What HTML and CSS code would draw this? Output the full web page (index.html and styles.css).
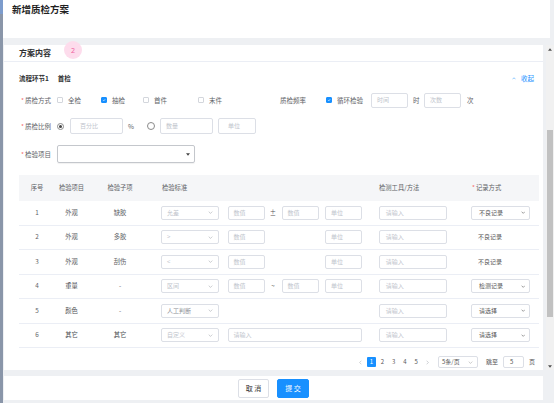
FILE: index.html
```html
<!DOCTYPE html>
<html lang="zh">
<head>
<meta charset="utf-8">
<title>新增质检方案</title>
<link rel="stylesheet" href="styles.css">
</head>
<body>
<div class="app">
  <div class="edge"></div>
  <div class="modal">
    <header class="modal-head"><h1>新增质检方案</h1></header>
    <div class="scroll">
      <section class="card">
        <div class="card-title">方案内容</div>
        <span class="step">2</span>
        <div class="card-body">
          <div class="flow-row">
            <span class="flow-name">流程环节1</span>
            <span class="flow-val">首检</span>
            <a class="collapse"><svg class="chev-up" viewBox="0 0 8 5"><path d="M1 4l3-3 3 3" fill="none" stroke="currentColor" stroke-width="1"/></svg>收起</a>
          </div>

          <div class="form-row r1">
            <div class="lbl"><i>*</i>质检方式</div>
            <div class="checks">
              <span class="chk-item"><span class="cb"></span>全检</span>
              <span class="chk-item"><span class="cb on"><svg viewBox="0 0 8 8"><path d="M2 4.2l1.6 1.6L6.2 2.6" fill="none" stroke="#fff" stroke-width="1.2"/></svg></span>抽检</span>
              <span class="chk-item"><span class="cb"></span>首件</span>
              <span class="chk-item"><span class="cb"></span>末件</span>
            </div>
            <div class="lbl-plain">质检频率</div>
            <span class="chk-item"><span class="cb on"><svg viewBox="0 0 8 8"><path d="M2 4.2l1.6 1.6L6.2 2.6" fill="none" stroke="#fff" stroke-width="1.2"/></svg></span>循环检验</span>
            <div class="inp w37 ml8"><span class="ph">时间</span></div>
            <span class="unit-txt ml5">时</span>
            <div class="inp w37 ml4"><span class="ph">次数</span></div>
            <span class="unit-txt ml6">次</span>
          </div>

          <div class="form-row r2">
            <div class="lbl"><i>*</i>质检比例</div>
            <span class="radio on"></span>
            <div class="inp w53 ml6 pl9"><span class="ph">百分比</span></div>
            <span class="unit-txt ml5">%</span>
            <span class="radio ml13"></span>
            <div class="inp w53 ml5"><span class="ph">数量</span></div>
            <div class="inp w38 ml5 pl9"><span class="ph">单位</span></div>
          </div>

          <div class="form-row r3">
            <div class="lbl"><i>*</i>检验项目</div>
            <div class="big-select"><svg viewBox="0 0 6 4"><path d="M0 0h6L3 4z" fill="#444"/></svg></div>
          </div>

          <div class="tbl">
            <div class="tr th">
              <div class="c">序号</div>
              <div class="c">检验项目</div>
              <div class="c">检验子项</div>
              <div class="l std-h">检验标准</div>
              <div class="l tool-h">检测工具/方法</div>
              <div class="l rec-h"><i>*</i>记录方式</div>
            </div>

            <div class="tr">
              <div class="c">1</div>
              <div class="c">外观</div>
              <div class="c">缺胶</div>
              <div class="std">
                <div class="sel s1"><span class="ph">允差</span><svg class="chev" viewBox="0 0 8 5"><path d="M1 1l3 3 3-3" fill="none" stroke="currentColor"/></svg></div>
                <div class="inp s3"><span class="ph">数值</span></div>
                <span class="sym">±</span>
                <div class="inp s5"><span class="ph">数值</span></div>
                <div class="inp s7"><span class="ph">单位</span></div>
              </div>
              <div class="tool"><div class="inp tool-inp"><span class="ph">请输入</span></div></div>
              <div class="rec"><div class="rsel">不良记录<svg class="chev" viewBox="0 0 8 5"><path d="M1 1l3 3 3-3" fill="none" stroke="currentColor"/></svg></div></div>
            </div>

            <div class="tr">
              <div class="c">2</div>
              <div class="c">外观</div>
              <div class="c">多胶</div>
              <div class="std">
                <div class="sel s1"><span class="ph">&gt;</span><svg class="chev" viewBox="0 0 8 5"><path d="M1 1l3 3 3-3" fill="none" stroke="currentColor"/></svg></div>
                <div class="inp s3"><span class="ph">数值</span></div>
                <div class="inp s7"><span class="ph">单位</span></div>
              </div>
              <div class="tool"><div class="inp tool-inp"><span class="ph">请输入</span></div></div>
              <div class="rec rec-txt">不良记录</div>
            </div>

            <div class="tr">
              <div class="c">3</div>
              <div class="c">外观</div>
              <div class="c">刮伤</div>
              <div class="std">
                <div class="sel s1"><span class="ph">&lt;</span><svg class="chev" viewBox="0 0 8 5"><path d="M1 1l3 3 3-3" fill="none" stroke="currentColor"/></svg></div>
                <div class="inp s3"><span class="ph">数值</span></div>
                <div class="inp s7"><span class="ph">单位</span></div>
              </div>
              <div class="tool"><div class="inp tool-inp"><span class="ph">请输入</span></div></div>
              <div class="rec rec-txt">不良记录</div>
            </div>

            <div class="tr">
              <div class="c">4</div>
              <div class="c dark">重量</div>
              <div class="c">-</div>
              <div class="std">
                <div class="sel s1"><span class="ph">区间</span><svg class="chev" viewBox="0 0 8 5"><path d="M1 1l3 3 3-3" fill="none" stroke="currentColor"/></svg></div>
                <div class="inp s3"><span class="ph">数值</span></div>
                <span class="sym">~</span>
                <div class="inp s5"><span class="ph">数值</span></div>
                <div class="inp s7"><span class="ph">单位</span></div>
              </div>
              <div class="tool"><div class="inp tool-inp"><span class="ph">请输入</span></div></div>
              <div class="rec"><div class="rsel">检测记录<svg class="chev" viewBox="0 0 8 5"><path d="M1 1l3 3 3-3" fill="none" stroke="currentColor"/></svg></div></div>
            </div>

            <div class="tr">
              <div class="c">5</div>
              <div class="c dark">颜色</div>
              <div class="c">-</div>
              <div class="std">
                <div class="sel s1"><span class="val">人工判断</span><svg class="chev" viewBox="0 0 8 5"><path d="M1 1l3 3 3-3" fill="none" stroke="currentColor"/></svg></div>
              </div>
              <div class="tool"><div class="inp tool-inp"><span class="ph">请输入</span></div></div>
              <div class="rec"><div class="rsel">请选择<svg class="chev" viewBox="0 0 8 5"><path d="M1 1l3 3 3-3" fill="none" stroke="currentColor"/></svg></div></div>
            </div>

            <div class="tr">
              <div class="c">6</div>
              <div class="c dark">其它</div>
              <div class="c dark">其它</div>
              <div class="std">
                <div class="sel s1"><span class="ph">自定义</span><svg class="chev" viewBox="0 0 8 5"><path d="M1 1l3 3 3-3" fill="none" stroke="currentColor"/></svg></div>
                <div class="inp wide"><span class="ph">请输入</span></div>
              </div>
              <div class="tool"><div class="inp tool-inp"><span class="ph">请输入</span></div></div>
              <div class="rec"><div class="rsel">请选择<svg class="chev" viewBox="0 0 8 5"><path d="M1 1l3 3 3-3" fill="none" stroke="currentColor"/></svg></div></div>
            </div>
          </div>

          <div class="pager">
            <span class="pg arrow"><svg viewBox="0 0 5 8"><path d="M4 1L1 4l3 3" fill="none" stroke="currentColor"/></svg></span>
            <span class="pg active">1</span>
            <span class="pg">2</span>
            <span class="pg">3</span>
            <span class="pg">4</span>
            <span class="pg">5</span>
            <span class="pg arrow"><svg viewBox="0 0 5 8"><path d="M1 1l3 3-3 3" fill="none" stroke="currentColor"/></svg></span>
            <div class="psize">5条/页<svg class="chev" viewBox="0 0 8 5"><path d="M1 1l3 3 3-3" fill="none" stroke="currentColor"/></svg></div>
            <span class="jump">跳至</span>
            <div class="pinp">5</div>
            <span class="jump-end">页</span>
          </div>
        </div>
      </section>
      <div class="scrollbar">
        <div class="sb-btn"><svg viewBox="0 0 6 4"><path d="M3 0l3 4H0z" fill="#505050"/></svg></div>
        <div class="sb-track"><div class="sb-thumb"></div></div>
        <div class="sb-btn"><svg viewBox="0 0 6 4"><path d="M0 0h6L3 4z" fill="#505050"/></svg></div>
      </div>
    </div>
    <footer class="modal-foot">
      <button class="btn">取 消</button>
      <button class="btn primary">提 交</button>
    </footer>
  </div>
</div>
</body>
</html>
```
FILE: styles.css
```css
* { box-sizing: border-box; margin: 0; padding: 0; }
html, body { width: 554px; height: 403px; overflow: hidden; }
body {
  font-family: "Noto Sans CJK SC", "Noto Sans", sans-serif;
  font-size: 6.5px;
  line-height: 1;
  color: #606266;
  background: #eef0f3;
}
.app { display: flex; height: 403px; }
.edge { width: 3px; background: linear-gradient(#7d9ccc 0, #7d9ccc 14px, #8a96a9 14px); }
.modal { width: 551px; display: flex; flex-direction: column; }

.modal-head { height: 38px; background: #fff; margin-right: 4px; padding-left: 9px; }
.modal-head h1 { font-size: 9.5px; line-height: 19px; font-weight: 700; color: #1f1f1f; }

.scroll { display: flex; margin-top: 7px; height: 325px; }
.card { position: relative; margin-left: 1px; width: 539px; background: #fff; }
.card-title {
  height: 17px; border-bottom: 1px solid #ebeef5; padding-left: 15px;
  font-size: 8px; line-height: 16px; font-weight: 700; color: #303133;
}
.step {
  position: absolute; left: 60px; top: -4px; width: 18px; height: 18px; border-radius: 50%;
  background: #fddcec; color: #f0609e; font-size: 7px; font-family: "Noto Sans", sans-serif;
  display: flex; align-items: center; justify-content: center;
}
.card-body { padding: 0 4px 0 15px; }

.flow-row { margin-top: 9px; height: 15px; display: flex; align-items: center; color: #303133; font-weight: 700; }
.flow-val { margin-left: 9px; }
.collapse { margin-left: auto; margin-right: 5px; color: #1890ff; font-weight: 400; display: flex; align-items: center; gap: 5px; }
.chev-up { width: 4px; height: 3px; }

.form-row { display: flex; align-items: center; }
.r1 { margin-top: 6px; height: 16px; }
.r2 { margin-top: 10px; height: 16px; }
.r3 { margin-top: 11px; height: 18px; }
.lbl { width: 38px; padding-left: 2px; display: flex; align-items: center; }
.lbl i, .rec-h i { font-style: normal; color: #f56c6c; width: 4px; }
.checks { width: 223px; display: grid; grid-template-columns: 44px 42px 55px auto; }
.chk-item { display: flex; align-items: center; gap: 5px; }
.cb { width: 6px; height: 6px; border: 1px solid #d3d6dc; border-radius: 1px; background: #fff; display: flex; }
.cb.on { background: #1890ff; border-color: #1890ff; }
.cb svg { width: 100%; height: 100%; }
.lbl-plain { width: 46px; }
.inp {
  height: 15px; border: 1px solid #dcdfe6; border-radius: 2px; background: #fff;
  display: flex; align-items: center; padding-left: 5px; font-size: 6px;
}
.ph { color: #c0c4cc; }
.val { color: #8d9096; }
.w37 { width: 37px; }
.w38 { width: 38px; }
.w53 { width: 53px; height: 16px; }
.w38 { height: 16px; }
.pl9 { padding-left: 9px; }
.ml4 { margin-left: 4.5px; }
.ml5 { margin-left: 5px; }
.ml6 { margin-left: 6px; }
.ml8 { margin-left: 8px; }
.ml13 { margin-left: 13px; }
.unit-txt { color: #606266; }
.radio { width: 7px; height: 7px; border: 1px solid #8a8a8a; border-radius: 50%; display: flex; align-items: center; justify-content: center; }
.radio.on::after { content: ""; width: 3px; height: 3px; border-radius: 50%; background: #444; }
.radio.ml13 { width: 8px; height: 8px; }
.big-select {
  width: 138px; height: 18px; border: 1px solid #c4c7cc; border-radius: 2px;
  box-shadow: 0 1px 1px rgba(0,0,0,0.06);
  display: flex; align-items: center; justify-content: flex-end; padding-right: 4px;
}
.big-select svg { width: 4px; height: 3px; }

.tbl { margin-top: 12px; width: 520px; }
.tr {
  display: grid; grid-template-columns: 36px 33px 64px 218px 93px 76px;
  height: 24.5px; border-bottom: 1px solid #ebeef5; align-items: center; font-size: 6.3px;
}
.tr.th { height: 26px; background: #f5f6f8; border-bottom: none; color: #606266; }
.c { text-align: center; }
.dark { color: #4a4c50; }
.std-h { padding-left: 10px; }
.tool-h { padding-left: 9px; }
.rec-h { padding-left: 9px; display: flex; }
.std {
  display: grid; grid-template-columns: 58px 9px 37px 17px 37px 6.5px 37px;
  padding-left: 8.5px; align-items: center;
}
.std .inp, .sel, .tool-inp, .rsel { height: 14px; }
.sel {
  grid-column: 1; border: 1px solid #dcdfe6; border-radius: 2px; display: flex; align-items: center;
  justify-content: space-between; padding: 0 5px 0 5.5px; font-size: 6px; color: #a8abb2;
}
.chev { width: 5px; height: 3px; }
.s3 { grid-column: 3; }
.sym { grid-column: 4; text-align: center; color: #555; }
.s5 { grid-column: 5; }
.s7 { grid-column: 7; }
.wide { grid-column: 3 / 8; }
.tool { padding-left: 8.7px; }
.tool-inp { width: 68.5px; padding-left: 6px; }
.rec { padding-left: 8px; }
.rsel {
  width: 59px; border: 1px solid #dcdfe6; border-radius: 2px; display: flex; align-items: center;
  justify-content: space-between; padding: 0 4px 0 7px; font-size: 6px; color: #555;
}
.rsel .chev { color: #555; width: 4.5px; }
.rec-txt { padding-left: 15px; font-size: 6px; color: #555; }

.pager { margin-top: 8px; height: 12px; display: flex; align-items: center; justify-content: flex-end; margin-right: 4px; font-size: 6px; color: #555; }
.pg { width: 9px; height: 10px; margin-right: 2.2px; display: flex; align-items: center; justify-content: center; border-radius: 1px; }
.pg.active { background: #1890ff; color: #fff; }
.pg.arrow { color: #b0b3b8; }
.pg.arrow svg { width: 3px; height: 5px; }
.psize {
  margin-left: 4px; width: 40px; height: 12px; border: 1px solid #dcdfe6; border-radius: 2px;
  display: flex; align-items: center; justify-content: space-between; padding: 0 4px 0 3px;
}
.psize .chev { color: #aaa; }
.jump { margin-left: 8px; }
.pinp { margin-left: 5px; width: 21px; height: 12px; border: 1px solid #dcdfe6; border-radius: 2px; display: flex; align-items: center; padding-left: 6px; }
.jump-end { margin-left: 5px; }

.scrollbar { margin-left: 3px; width: 8px; background: #f1f1f1; display: flex; flex-direction: column; }
.sb-btn { height: 8px; display: flex; align-items: center; justify-content: center; }
.sb-btn svg { width: 4px; height: 3px; }
.sb-track { flex: 1; padding-top: 77px; }
.sb-thumb { margin: 0 1px; height: 187px; background: #c1c1c1; }

.modal-foot {
  margin-top: 6px; margin-left: 1px; width: 539px; height: 24px; background: #fff;
  display: flex; align-items: center; justify-content: center; gap: 8px;
}
.btn {
  width: 31px; height: 19px; border: 1px solid #dcdfe6; border-radius: 2px; background: #fff;
  font-family: "Noto Sans CJK SC", sans-serif; font-size: 7px; color: #333;
}
.btn.primary { width: 32px; background: #1890ff; border-color: #1890ff; color: #fff; }
```
